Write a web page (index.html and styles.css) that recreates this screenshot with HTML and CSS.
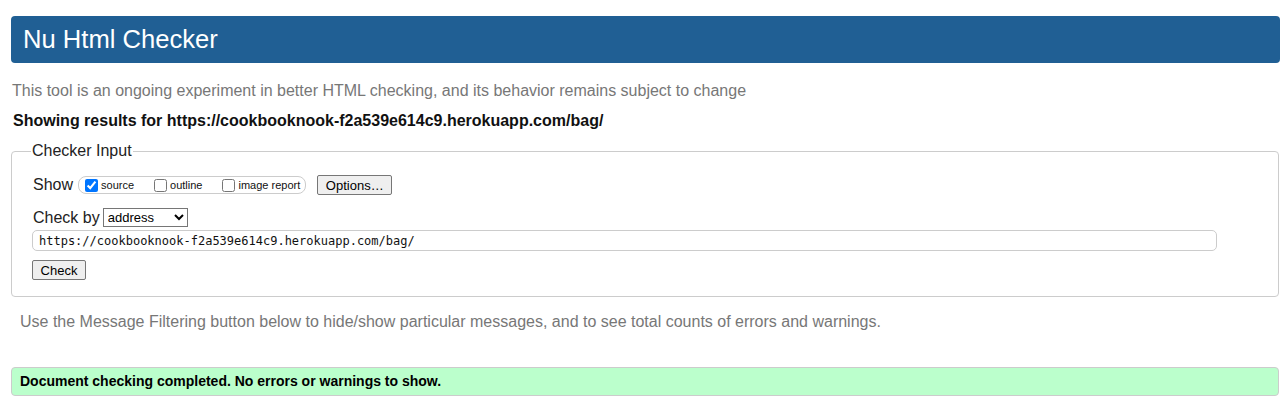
FILE: index.html
```html
<!DOCTYPE html>
<html>
<head>
<meta charset="utf-8">
<title>Nu Html Checker</title>
<link rel="stylesheet" href="styles.css">
</head>
<body>
<h1 class="title">Nu Html Checker</h1>
<p class="intro">This tool is an ongoing experiment in better HTML checking, and its behavior remains subject to change</p>
<p class="results">Showing results for https://cookbooknook-f2a539e614c9.herokuapp.com/bag/</p>
<fieldset class="input-box">
  <legend class="legend">Checker Input</legend>
  <div class="row show-row">
    <span class="label">Show</span>
    <span class="opts">
      <label class="opt"><input type="checkbox" class="cb" checked>source</label>
      <label class="opt"><input type="checkbox" class="cb">outline</label>
      <label class="opt"><input type="checkbox" class="cb">image report</label>
    </span>
    <button class="btn options-btn">Options…</button>
  </div>
  <div class="row by-row">
    <span class="label">Check by</span>
    <select class="sel"><option>address</option></select>
  </div>
  <div class="row url-row">
    <input class="url" type="text" value="https://cookbooknook-f2a539e614c9.herokuapp.com/bag/">
  </div>
  <div class="row check-row">
    <button class="btn check-btn">Check</button>
  </div>
</fieldset>
<p class="filter">Use the Message Filtering button below to hide/show particular messages, and to see total counts of errors and warnings.</p>
<div class="success">Document checking completed. No errors or warnings to show.</div>
</body>
</html>
```
FILE: styles.css
```css
html, body {
  background: #fff;
}
body {
  margin: 0;
  padding: 16px 6px 0 11px;
  font-family: "Liberation Sans", Arial, sans-serif;
  color: #000;
}
.title {
  margin: 0;
  height: 47px;
  line-height: 47px;
  background: #205f94;
  color: #fff;
  font-size: 25.6px;
  font-weight: normal;
  padding-left: 12px;
  border-radius: 4px;
}
.intro {
  margin: 19px 0 0 1px;
  font-size: 16px;
  line-height: 18px;
  color: #777;
}
.results {
  margin: 12px 0 0 2px;
  font-size: 16px;
  line-height: 18px;
  font-weight: bold;
  color: #111;
}
.input-box {
  margin: 12px 1px 0 0;
  border: 1px solid #ccc;
  border-radius: 4px;
  padding: 0 20px 16px 21px;
}
.legend {
  margin-left: -2px;
  padding: 0 1px;
  font-size: 16px;
  line-height: 18px;
  color: #222;
}
.row {
  display: flex;
  align-items: center;
}
.label {
  font-size: 16px;
  line-height: 18px;
  color: #222;
}
.show-row {
  margin-top: 15px;
  height: 20px;
}
.opts {
  display: flex;
  align-items: center;
  margin-left: 5px;
  height: 16px;
  border: 1px solid #ccc;
  border-radius: 8px;
  padding: 0 5px 0 3px;
}
.opt {
  display: flex;
  align-items: center;
  font-size: 11px;
  color: #111;
  margin-right: 17px;
}
.opt:last-child {
  margin-right: 0;
}
.cb {
  width: 13px;
  height: 13px;
  margin: 0 3px 0 3px;
}
.btn {
  font-family: "Liberation Sans", Arial, sans-serif;
  font-size: 13px;
  height: 20px;
  padding: 0 6px;
  background: #efefef;
  border: 1px solid #767676;
  border-radius: 2px;
  color: #000;
}
.options-btn {
  margin-left: 11px;
  width: 75px;
}
.by-row {
  margin-top: 13px;
}
.sel {
  margin-left: 3px;
  width: 85px;
  height: 19px;
  font-family: "Liberation Sans", Arial, sans-serif;
  font-size: 13px;
  border: 1px solid #767676;
  border-radius: 0;
  background: #fff;
}
.url-row {
  margin-top: 3px;
}
.url {
  width: 1185px;
  height: 21px;
  box-sizing: border-box;
  border: 1px solid #ccc;
  border-radius: 5px;
  padding: 0 6px;
  font-family: "DejaVu Sans Mono", "Liberation Mono", monospace;
  font-size: 12px;
  color: #111;
  margin-left: -1px;
}
.check-row {
  margin-top: 9px;
}
.check-btn {
  margin-left: -1px;
  width: 54px;
}
.filter {
  margin: 16px 0 0 9px;
  font-size: 16px;
  line-height: 18px;
  color: #777;
}
.success {
  margin: 36px 1px 0 0;
  height: 29px;
  box-sizing: border-box;
  line-height: 27px;
  background: #bbffcc;
  border: 1px solid #ccc;
  border-radius: 4px;
  padding-left: 8px;
  font-size: 14px;
  font-weight: bold;
  color: #000;
}
```
